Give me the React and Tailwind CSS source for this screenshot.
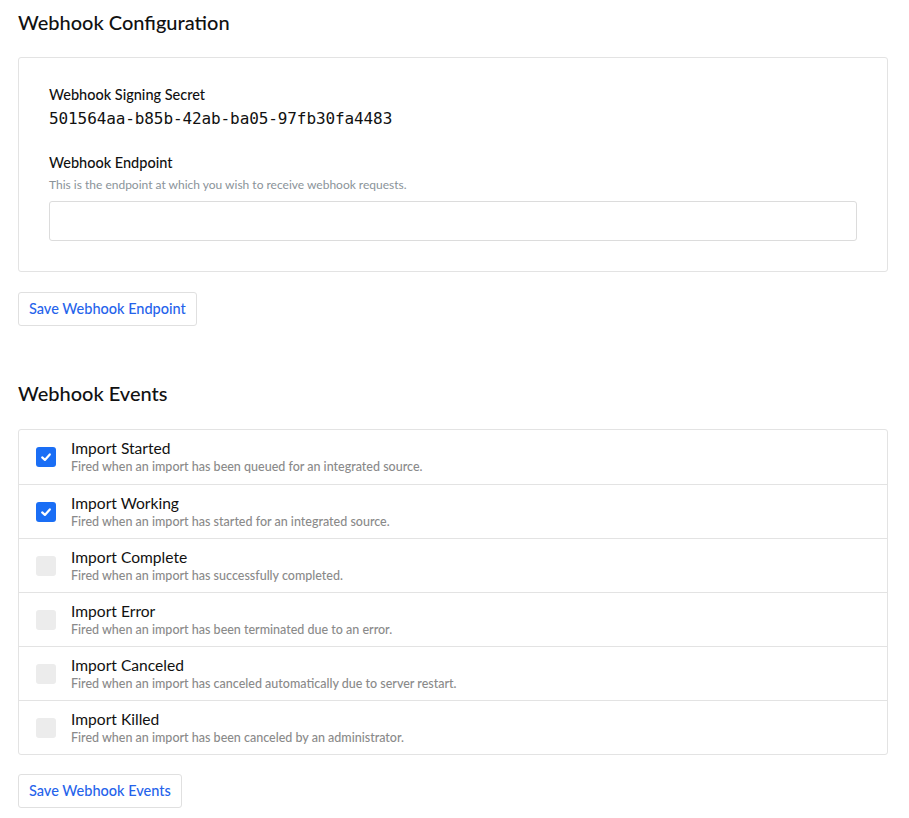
import React from "react";

const events = [
  { t: "Import Started", d: "Fired when an import has been queued for an integrated source.", c: true },
  { t: "Import Working", d: "Fired when an import has started for an integrated source.", c: true },
  { t: "Import Complete", d: "Fired when an import has successfully completed.", c: false },
  { t: "Import Error", d: "Fired when an import has been terminated due to an error.", c: false },
  { t: "Import Canceled", d: "Fired when an import has canceled automatically due to server restart.", c: false },
  { t: "Import Killed", d: "Fired when an import has been canceled by an administrator.", c: false },
];

export default function App() {
  return (
    <div className="bg-white min-h-[818px] px-[18px] pt-[8px] pb-[10px] text-[#111] font-['Lato','Noto_Sans',sans-serif] w-[909px]">
      <h1 className="text-[20px] leading-[28px] font-medium">Webhook Configuration</h1>
      <div className="mt-[21px] w-[870px] border border-[#e3e3e3] rounded-[3px] px-[30px] pt-[27px] pb-[30px]">
        <div className="text-[14.5px] leading-[20px] font-medium">Webhook Signing Secret</div>
        <div className="mt-[3px] text-[16px] leading-[22px] font-['DejaVu_Sans_Mono',monospace] tracking-[-0.1px]">501564aa-b85b-42ab-ba05-97fb30fa4483</div>
        <div className="mt-[23px] text-[14.5px] leading-[20px] font-medium">Webhook Endpoint</div>
        <div className="mt-[4px] text-[12px] leading-[16px] text-[#8a9399]">This is the endpoint at which you wish to receive webhook requests.</div>
        <input className="mt-[8px] block w-full h-[40px] border border-[#dcdcdc] rounded-[3px] outline-none px-3" />
      </div>
      <button className="mt-[20px] h-[34px] px-[10px] border border-[#e0e0e0] rounded-[3px] text-[14.5px] font-medium text-[#2563eb] bg-white">Save Webhook Endpoint</button>

      <h2 className="mt-[53px] text-[20px] leading-[28px] font-medium">Webhook Events</h2>
      <div className="mt-[22px] w-[870px] border border-[#e3e3e3] rounded-[3px]">
        {events.map((e, i) => (
          <div key={i} className={"h-[54px] flex items-center gap-[15px] px-[17px]" + (i > 0 ? " border-t border-[#e3e3e3]" : "")}>
            {e.c ? (
              <div className="w-[20px] h-[20px] rounded-[3px] bg-[#1a6ef5] flex items-center justify-center">
                <svg width="14" height="14" viewBox="0 0 14 14"><path d="M3.2 7.4 L5.9 9.9 L10.8 4.4" fill="none" stroke="white" strokeWidth="2.2" strokeLinecap="round" strokeLinejoin="round" /></svg>
              </div>
            ) : (
              <div className="w-[20px] h-[20px] rounded-[3px] bg-[#ececec]" />
            )}
            <div className="-mt-[1px]">
              <div className="text-[15.6px] leading-[20px]">{e.t}</div>
              <div className="text-[12.5px] leading-[17px] text-[#8a8a8a] font-medium">{e.d}</div>
            </div>
          </div>
        ))}
      </div>
      <button className="mt-[19px] h-[34px] px-[10px] border border-[#e0e0e0] rounded-[3px] text-[14.5px] font-medium text-[#2563eb] bg-white">Save Webhook Events</button>
    </div>
  );
}
